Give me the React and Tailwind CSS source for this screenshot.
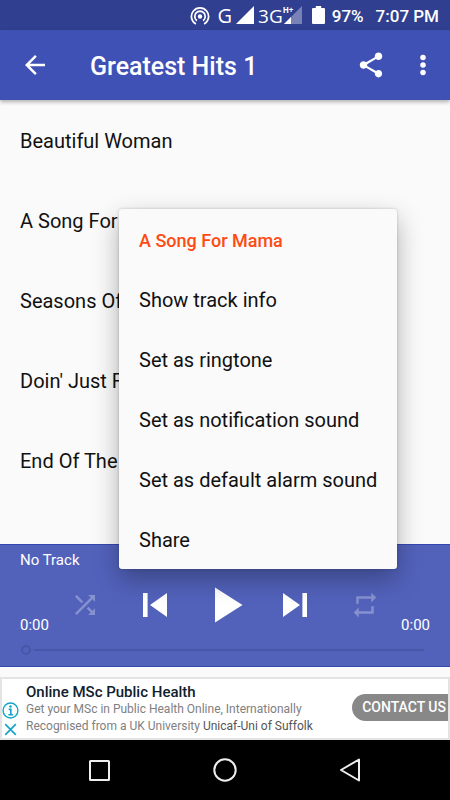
import React from 'react';

const tracks = [
  'Beautiful Woman',
  'A Song For Mama',
  'Seasons Of',
  "Doin' Just Fine",
  'End Of The Road',
];

const menuItems = [
  'Show track info',
  'Set as ringtone',
  'Set as notification sound',
  'Set as default alarm sound',
  'Share',
];

const StatusBar = () => (
  <div className="flex h-[30px] shrink-0 items-center justify-end bg-[#303f8f] pt-0.5 pr-[11px] text-white">
    <svg className="mr-2 h-5 w-5" viewBox="0 0 18 18" fill="none" stroke="currentColor" strokeWidth="1.6">
      <circle cx="9" cy="9.5" r="2" fill="currentColor" stroke="none" />
      <path d="M5.300 16.200A7.700 7.700 0 1 1 12.700 16.200" />
      <path d="M6.200 13.200A4.700 4.700 0 1 1 11.800 13.200" />
    </svg>
    <span className="mr-1 font-['Open_Sans','Noto_Sans',sans-serif] text-[20px] leading-5">G</span>
    <svg className="mr-1 mb-0.5 h-[18px] w-[18px]" viewBox="0 0 18 18" fill="currentColor">
      <path d="M18 0V18H0Z" />
    </svg>
    <span className="font-['Open_Sans','Noto_Sans',sans-serif] text-[19px] leading-5">3G</span>
    <div className="relative mr-2.5 mb-0.5 h-[18px] w-[19px]">
      <svg className="h-[18px] w-[19px]" viewBox="0 0 19 18" fill="currentColor">
        <path d="M19 0V18H1Z" opacity="0.35" />
        <path d="M8 11V18H1Z" />
      </svg>
      <span className="absolute top-0 left-0 font-['Open_Sans','Noto_Sans',sans-serif] text-[8px] leading-2 font-bold">H+</span>
    </div>
    <svg className="mr-[7px] mb-0.5 h-[18px] w-[13px]" viewBox="0 0 12 18" preserveAspectRatio="none" fill="currentColor">
      <path d="M3.500 0h5v2H11a1 1 0 0 1 1 1v14a1 1 0 0 1-1 1H1a1 1 0 0 1-1-1V3a1 1 0 0 1 1-1h2.500z" />
    </svg>
    <span className="mr-3 text-[17px] leading-5 font-medium">97%</span>
    <span className="text-[17px] leading-5 font-medium">7:07 PM</span>
  </div>
);

const Header = () => (
  <header className="z-10 flex h-[70px] shrink-0 items-center bg-[#3f51b5] px-[15px] text-white shadow-[0_2px_4px_rgba(0,0,0,0.3)]">
    <button type="button" aria-label="Back" className="flex h-10 w-10 items-center justify-center">
      <svg className="h-[30px] w-[30px]" viewBox="0 0 24 24" fill="currentColor">
        <path d="M20 11H7.830l5.590-5.590L12 4l-8 8 8 8 1.410-1.410L7.830 13H20v-2z" />
      </svg>
    </button>
    <h1 className="ml-[35px] flex-1 pt-1 text-[25px] font-medium">Greatest Hits 1</h1>
    <button type="button" aria-label="Share" className="mr-3 flex h-10 w-10 items-center justify-center">
      <svg className="h-[30px] w-[30px]" viewBox="0 0 24 24" fill="currentColor">
        <path d="M18 16.080c-.76 0-1.440.3-1.960.77L8.910 12.700c.05-.23.09-.46.09-.7s-.04-.47-.09-.7l7.050-4.110c.54.5 1.250.81 2.040.81 1.660 0 3-1.340 3-3s-1.340-3-3-3-3 1.340-3 3c0 .24.04.47.09.7L8.040 9.810C7.500 9.310 6.790 9 6 9c-1.660 0-3 1.340-3 3s1.340 3 3 3c.79 0 1.500-.31 2.040-.81l7.120 4.160c-.05.21-.08.43-.08.65 0 1.610 1.310 2.920 2.920 2.920s2.920-1.310 2.920-2.920-1.310-2.920-2.920-2.920z" />
      </svg>
    </button>
    <button type="button" aria-label="More options" className="-mr-2 flex h-10 w-10 items-center justify-center">
      <svg className="h-[30px] w-[30px]" viewBox="0 0 24 24" fill="currentColor">
        <circle cx="12" cy="6" r="2.200" />
        <circle cx="12" cy="12" r="2.200" />
        <circle cx="12" cy="18" r="2.200" />
      </svg>
    </button>
  </header>
);

const ControlButton = ({ label, className = '', iconClass = 'h-[30px] w-[30px]', children }) => (
  <button type="button" aria-label={label} className={`flex flex-1 items-center justify-center ${className}`}>
    <svg className={iconClass} viewBox="0 0 24 24" fill="currentColor">
      {children}
    </svg>
  </button>
);

const Player = () => (
  <section className="shrink-0 border-y border-[#3548b0] bg-[#5262bb] px-5 text-white">
    <p className="h-[31px] text-[15px] leading-[31px]">No Track</p>
    <div className="flex h-[58px]">
      <span className="w-[30px] self-end text-[15px] leading-[18px]">0:00</span>
      <ControlButton label="Shuffle" className="text-white/30">
        <path d="M10.590 9.170L5.410 4 4 5.410l5.170 5.170 1.420-1.410zM14.500 4l2.040 2.040L4 18.590 5.410 20 17.960 7.460 20 9.500V4h-5.500zm.33 9.410l-1.410 1.410 3.130 3.130L14.500 20H20v-5.500l-2.040 2.040-3.130-3.130z" />
      </ControlButton>
      <ControlButton label="Previous" iconClass="h-12 w-12">
        <path d="M6 6h2.300v12H6zM9.500 12L18 18V6z" />
      </ControlButton>
      <ControlButton label="Play" iconClass="h-15 w-15">
        <path d="M8 5v14l11-7z" />
      </ControlButton>
      <ControlButton label="Next" iconClass="h-12 w-12">
        <path d="M6 18l8.500-6L6 6v12zM15.700 6v12H18V6z" />
      </ControlButton>
      <ControlButton label="Repeat" className="text-white/30">
        <path d="M7 7h10v3l4-4-4-4v3H5v6h2V7zm10 10H7v-3l-4 4 4 4v-3h12v-6h-2v4z" />
      </ControlButton>
      <span className="w-[30px] self-end text-right text-[15px] leading-[18px]">0:00</span>
    </div>
    <div className="flex h-8 items-center pr-1.5 pl-px">
      <input
        type="range"
        aria-label="Position"
        min="0"
        max="100"
        defaultValue="0"
        className="h-4 w-full appearance-none bg-transparent [&::-webkit-slider-runnable-track]:h-0.5 [&::-webkit-slider-runnable-track]:bg-[#4757a8] [&::-webkit-slider-thumb]:-mt-1 [&::-webkit-slider-thumb]:h-2.5 [&::-webkit-slider-thumb]:w-2.5 [&::-webkit-slider-thumb]:appearance-none [&::-webkit-slider-thumb]:rounded-full [&::-webkit-slider-thumb]:border-2 [&::-webkit-slider-thumb]:border-[#4757a8] [&::-webkit-slider-thumb]:bg-[#5262bb] [&::-webkit-slider-thumb]:shadow-[0_0_0_3px_#5262bb]"
      />
    </div>
  </section>
);

const AdBanner = () => (
  <aside className="mt-2.5 flex h-[63px] shrink-0 border-2 border-[#e4e4e4] bg-white">
    <div className="flex w-6 shrink-0 flex-col items-start gap-0.5 pt-[23px] text-[#13a6c9]">
      <svg className="h-[17px] w-[17px]" viewBox="0 0 16 16" fill="none" stroke="currentColor" strokeWidth="1.3">
        <circle cx="8" cy="8" r="7" />
        <path d="M6.300 7h2v5M6 12h4.500" strokeWidth="1.600" />
        <circle cx="8" cy="4.300" r="1.200" fill="currentColor" stroke="none" />
      </svg>
      <svg className="h-[17px] w-[17px]" viewBox="0 0 16 16" fill="none" stroke="currentColor" strokeWidth="1.6">
        <path d="M3 3l10 10M13 3l-10 10" />
      </svg>
    </div>
    <div className="min-w-0 flex-1 pt-1 whitespace-nowrap">
      <h2 className="text-[15px] leading-[18px] font-medium text-[#10202e]">Online MSc Public Health</h2>
      <p className="text-[12px] leading-[17px] text-[#808080]">Get your MSc in Public Health Online, Internationally</p>
      <p className="text-[12px] leading-[17px] text-[#808080]">
        Recognised from a UK University <span className="text-[#555]">Unicaf-Uni of Suffolk</span>
      </p>
    </div>
    <button type="button" className="mt-[15px] h-[27px] shrink-0 rounded-l-full bg-[#888] pr-0.5 pl-2.5 text-[14px] font-medium text-white">
      CONTACT US
    </button>
  </aside>
);

const NavBar = () => (
  <nav className="grid h-[60px] shrink-0 grid-cols-3 bg-black px-9 text-[#eee]">
    <button type="button" aria-label="Recent apps" className="flex items-center justify-center">
      <svg className="h-6 w-6" viewBox="0 0 24 24" fill="none" stroke="currentColor" strokeWidth="2">
        <rect x="3" y="3" width="19" height="19" rx="0.5" />
      </svg>
    </button>
    <button type="button" aria-label="Home" className="flex items-center justify-center">
      <svg className="h-6 w-6" viewBox="0 0 24 24" fill="none" stroke="currentColor" strokeWidth="2">
        <circle cx="12" cy="12" r="10.700" />
      </svg>
    </button>
    <button type="button" aria-label="Back" className="flex items-center justify-center">
      <svg className="h-6 w-6" viewBox="0 0 24 24" fill="none" stroke="currentColor" strokeWidth="2" strokeLinejoin="round">
        <path d="M20 1.500v21L2 12z" />
      </svg>
    </button>
  </nav>
);

const ContextMenu = () => (
  <div
    role="menu"
    className="absolute top-[209px] left-[119px] z-20 rounded-[3px] bg-[#fafafa] shadow-[0_10px_26px_rgba(0,0,0,0.3),0_0_3px_rgba(0,0,0,0.2)]"
  >
    <h2 className="flex h-15 items-center px-5 pt-0.5 text-[18px] font-medium text-[#ff4a12]">A Song For Mama</h2>
    {menuItems.map((item) => (
      <button key={item} type="button" role="menuitem" className="block h-15 w-full px-5 pt-0.5 text-left text-[20px] whitespace-nowrap">
        {item}
      </button>
    ))}
  </div>
);

const App = () => (
  <div className="relative flex min-h-screen flex-col bg-[#fafafa] font-[Roboto,sans-serif] text-[#111]">
    <StatusBar />
    <Header />
    <ul className="flex-1">
      {tracks.map((track) => (
        <li key={track} className="flex h-20 items-center px-5 pt-0.5 text-[20px]">
          {track}
        </li>
      ))}
    </ul>
    <Player />
    <AdBanner />
    <NavBar />
    <ContextMenu />
  </div>
);

export default App;
